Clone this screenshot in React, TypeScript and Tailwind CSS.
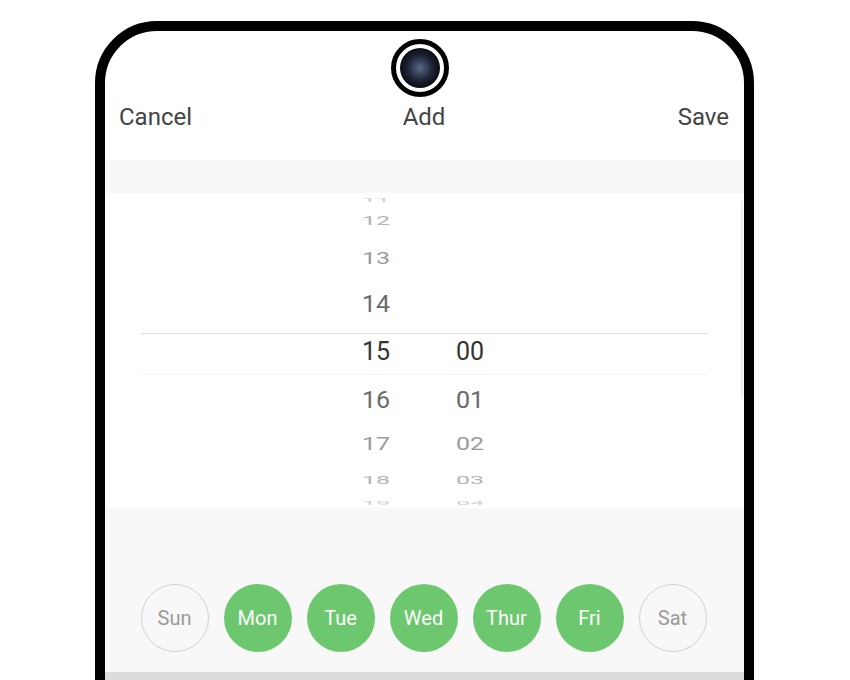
import React from "react";

const hours = [
  { h: "11", m: "", height: "h-[12px]", extra: "", scale: "scale-y-[0.25]", color: "text-[#d0d0d0]" },
  { h: "12", m: "", height: "h-[31px]", extra: "", scale: "scale-y-[0.5]", color: "text-[#b4b4b4]" },
  { h: "13", m: "", height: "h-[44px]", extra: "", scale: "scale-y-[0.68]", color: "text-[#9a9a9a]" },
  { h: "14", m: "", height: "h-[53px]", extra: "pb-[7px]", scale: "scale-y-[0.95]", color: "text-[#6a6a6a]" },
  { h: "15", m: "00", height: "h-[42px]", extra: "pb-[5px] border-t-[1.5px] border-t-[#e2e2e2] border-b border-b-[#f4f4f4]", scale: "scale-y-100", color: "text-[#333333]" },
  { h: "16", m: "01", height: "h-[48px]", extra: "", scale: "scale-y-[0.97]", color: "text-[#6a6a6a]" },
  { h: "17", m: "02", height: "h-[41px]", extra: "", scale: "scale-y-[0.72]", color: "text-[#9a9a9a]" },
  { h: "18", m: "03", height: "h-[32px]", extra: "", scale: "scale-y-[0.45]", color: "text-[#b4b4b4]" },
  { h: "19", m: "04", height: "h-[12px]", extra: "", scale: "scale-y-[0.25]", color: "text-[#d0d0d0]" },
];

const days = [
  { d: "Sun", on: false },
  { d: "Mon", on: true },
  { d: "Tue", on: true },
  { d: "Wed", on: true },
  { d: "Thur", on: true },
  { d: "Fri", on: true },
  { d: "Sat", on: false },
];

export default function App() {
  return (
    <div
      className="w-[850px] h-[680px] bg-white overflow-hidden pt-[21px] pl-[95px]"
      style={{ fontFamily: "Roboto, 'Noto Sans', sans-serif" }}
    >
      <div className="w-[659px] h-[720px] border-[10px] border-black rounded-t-[62px] bg-white overflow-hidden flex flex-col">
        {/* camera */}
        <div className="flex justify-center pt-[8px] pr-[9px]">
          <div className="w-[58px] h-[58px] rounded-full border-[5px] border-black bg-white flex items-center justify-center">
            <div
              className="w-[40px] h-[40px] rounded-full"
              style={{ background: "radial-gradient(circle at 50% 50%, #5b6a8a 0%, #1c2233 45%, #05060a 80%)" }}
            />
          </div>
        </div>
        {/* header */}
        <div className="h-[40px] grid grid-cols-3 items-center pl-[14px] pr-[15px] text-[24px] text-[#444444]">
          <span className="text-left">Cancel</span>
          <span className="text-center">Add</span>
          <span className="text-right">Save</span>
        </div>
        <div className="h-[23px]" />
        <div className="h-[33px] bg-[#f7f7f7]" />
        {/* picker */}
        <div className="relative h-[315px] bg-white overflow-hidden">
          <div className="flex flex-col mx-[36px]">
            {hours.map((r) => (
              <div key={r.h} className={`${r.height} ${r.extra} flex items-center pl-[205px]`}>
                <div className={`w-[60px] text-center text-[25px] leading-none ${r.scale} ${r.color}`}>{r.h}</div>
                <div className={`w-[60px] ml-[34px] text-center text-[25px] leading-none ${r.scale} ${r.color}`}>{r.m}</div>
              </div>
            ))}
          </div>
          <div className="absolute right-[1px] top-[7px] w-[2px] h-[198px] bg-[#ececec] rounded" />
        </div>
        {/* days */}
        <div className="h-[164px] bg-[#f8f8f8] flex justify-center items-start pt-[76px] gap-[15px] pr-[2px]">
          {days.map((x) =>
            x.on ? (
              <div
                key={x.d}
                className="w-[68px] h-[68px] rounded-full bg-[#6cc76f] text-white text-[20px] flex items-center justify-center"
              >
                {x.d}
              </div>
            ) : (
              <div
                key={x.d}
                className="w-[68px] h-[68px] rounded-full border-[1.5px] border-[#d2d2d2] text-[#9a9a9a] text-[20px] flex items-center justify-center"
              >
                {x.d}
              </div>
            )
          )}
        </div>
        <div className="flex-1 bg-[#dcdcdc]" />
      </div>
    </div>
  );
}
